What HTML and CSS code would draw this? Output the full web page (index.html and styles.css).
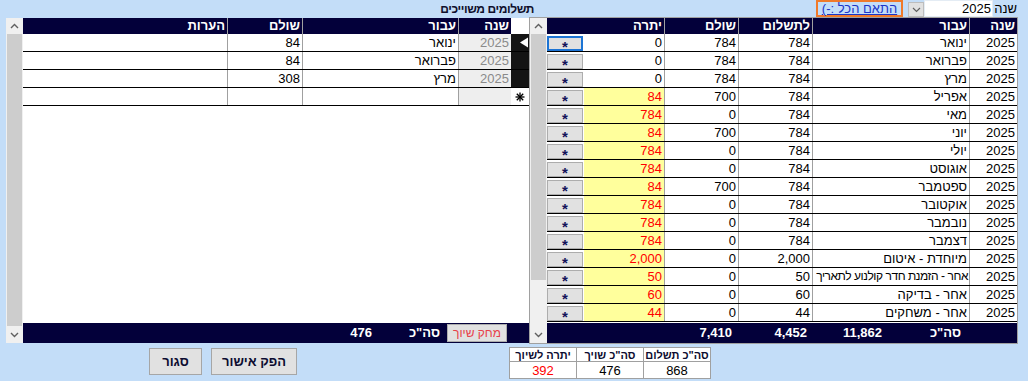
FILE: index.html
```html
<!DOCTYPE html>
<html lang="he" dir="rtl">
<head>
<meta charset="utf-8">
<title>תשלומים</title>
<link rel="stylesheet" href="styles.css">
</head>
<body>
<div class="topbar">
  <span class="year-label">שנה</span>
  <span class="yearbox"><span class="yearval">2025</span></span>
  <span class="dd-btn"><svg width="9" height="6" viewBox="0 0 9 6"><polyline points="1,1 4.5,4.5 8,1" fill="none" stroke="#606060" stroke-width="1.2"/></svg></span>
  <a class="fit-btn">התאם הכל :-)</a>
  <span class="title">תשלומים משוייכים</span>
</div>

<div class="panels">
  <div class="panel main-panel">
    <div class="grid">
      <div class="mrow ghead">
        <div class="c sep">שנה</div>
        <div class="c sep">עבור</div>
        <div class="c sep">לתשלום</div>
        <div class="c sep">שולם</div>
        <div class="c">יתרה</div>
        <div class="c"></div>
      </div>
      <div class="gbody">
        <div class="mrow"><div class="c sep">2025</div><div class="c sep">ינואר</div><div class="c sep">784</div><div class="c sep">784</div><div class="c">0</div><div class="c cb"><span class="rbtn focus">*</span></div></div>
        <div class="mrow"><div class="c sep">2025</div><div class="c sep">פברואר</div><div class="c sep">784</div><div class="c sep">784</div><div class="c">0</div><div class="c cb"><span class="rbtn">*</span></div></div>
        <div class="mrow"><div class="c sep">2025</div><div class="c sep">מרץ</div><div class="c sep">784</div><div class="c sep">784</div><div class="c">0</div><div class="c cb"><span class="rbtn">*</span></div></div>
        <div class="mrow"><div class="c sep">2025</div><div class="c sep">אפריל</div><div class="c sep">784</div><div class="c sep">700</div><div class="c due">84</div><div class="c cb"><span class="rbtn">*</span></div></div>
        <div class="mrow"><div class="c sep">2025</div><div class="c sep">מאי</div><div class="c sep">784</div><div class="c sep">0</div><div class="c due">784</div><div class="c cb"><span class="rbtn">*</span></div></div>
        <div class="mrow"><div class="c sep">2025</div><div class="c sep">יוני</div><div class="c sep">784</div><div class="c sep">700</div><div class="c due">84</div><div class="c cb"><span class="rbtn">*</span></div></div>
        <div class="mrow"><div class="c sep">2025</div><div class="c sep">יולי</div><div class="c sep">784</div><div class="c sep">0</div><div class="c due">784</div><div class="c cb"><span class="rbtn">*</span></div></div>
        <div class="mrow"><div class="c sep">2025</div><div class="c sep">אוגוסט</div><div class="c sep">784</div><div class="c sep">0</div><div class="c due">784</div><div class="c cb"><span class="rbtn">*</span></div></div>
        <div class="mrow"><div class="c sep">2025</div><div class="c sep">ספטמבר</div><div class="c sep">784</div><div class="c sep">700</div><div class="c due">84</div><div class="c cb"><span class="rbtn">*</span></div></div>
        <div class="mrow"><div class="c sep">2025</div><div class="c sep">אוקטובר</div><div class="c sep">784</div><div class="c sep">0</div><div class="c due">784</div><div class="c cb"><span class="rbtn">*</span></div></div>
        <div class="mrow"><div class="c sep">2025</div><div class="c sep">נובמבר</div><div class="c sep">784</div><div class="c sep">0</div><div class="c due">784</div><div class="c cb"><span class="rbtn">*</span></div></div>
        <div class="mrow"><div class="c sep">2025</div><div class="c sep">דצמבר</div><div class="c sep">784</div><div class="c sep">0</div><div class="c due">784</div><div class="c cb"><span class="rbtn">*</span></div></div>
        <div class="mrow"><div class="c sep">2025</div><div class="c sep">מיוחדת - איטום</div><div class="c sep">2,000</div><div class="c sep">0</div><div class="c due">2,000</div><div class="c cb"><span class="rbtn">*</span></div></div>
        <div class="mrow"><div class="c sep">2025</div><div class="c sep tight">אחר - הזמנת חדר קולנוע לתאריך</div><div class="c sep">50</div><div class="c sep">0</div><div class="c due">50</div><div class="c cb"><span class="rbtn">*</span></div></div>
        <div class="mrow"><div class="c sep">2025</div><div class="c sep">אחר - בדיקה</div><div class="c sep">60</div><div class="c sep">0</div><div class="c due">60</div><div class="c cb"><span class="rbtn">*</span></div></div>
        <div class="mrow"><div class="c sep">2025</div><div class="c sep">אחר - משחקים</div><div class="c sep">44</div><div class="c sep">0</div><div class="c due">44</div><div class="c cb"><span class="rbtn">*</span></div></div>
      </div>
      <div class="gfoot main-foot">
        <span class="ft-label">סה"כ</span>
        <span class="ft-num">11,862</span>
        <span class="ft-num">4,452</span>
        <span class="ft-num">7,410</span>
      </div>
    </div>
    <div class="vscroll">
      <div class="sb-arrow"><svg width="9" height="6" viewBox="0 0 9 6"><polyline points="1,5 4.5,1.5 8,5" fill="none" stroke="#606060" stroke-width="1.4"/></svg></div>
      <div class="sb-thumb main-thumb"></div>
      <div class="sb-track"></div>
      <div class="sb-arrow down"><svg width="9" height="6" viewBox="0 0 9 6"><polyline points="1,1 4.5,4.5 8,1" fill="none" stroke="#606060" stroke-width="1.4"/></svg></div>
    </div>
  </div>

  <div class="panel sub-panel">
    <div class="grid">
      <div class="srow ghead">
        <div class="c sel-head"></div>
        <div class="c sep">שנה</div>
        <div class="c sep">עבור</div>
        <div class="c sep">שולם</div>
        <div class="c">הערות</div>
      </div>
      <div class="gbody">
        <div class="srow"><div class="c sel dark"><svg width="10" height="11" viewBox="0 0 10 11"><polygon points="1,5.5 9,0.5 9,10.5" fill="#fff"/></svg></div><div class="c sep yr">2025</div><div class="c sep">ינואר</div><div class="c sep">84</div><div class="c"></div></div>
        <div class="srow"><div class="c sel dark"></div><div class="c sep yr">2025</div><div class="c sep">פברואר</div><div class="c sep">84</div><div class="c"></div></div>
        <div class="srow"><div class="c sel dark"></div><div class="c sep yr">2025</div><div class="c sep">מרץ</div><div class="c sep">308</div><div class="c"></div></div>
        <div class="srow"><div class="c sel"><svg width="10" height="10" viewBox="0 0 10 10"><g stroke="#000" stroke-width="1.3"><line x1="5" y1="0.5" x2="5" y2="9.5"/><line x1="0.5" y1="5" x2="9.5" y2="5"/><line x1="1.8" y1="1.8" x2="8.2" y2="8.2"/><line x1="8.2" y1="1.8" x2="1.8" y2="8.2"/></g></svg></div><div class="c sep yr"></div><div class="c sep"></div><div class="c sep"></div><div class="c"></div></div>
      </div>
      <div class="gfoot sub-foot">
        <span class="del-btn">מחק שיוך</span>
        <span class="ft-label sub-label">סה"כ</span>
        <span class="ft-num sub-num">476</span>
      </div>
    </div>
    <div class="vscroll">
      <div class="sb-arrow"><svg width="9" height="6" viewBox="0 0 9 6"><polyline points="1,5 4.5,1.5 8,5" fill="none" stroke="#606060" stroke-width="1.4"/></svg></div>
      <div class="sb-thumb sub-thumb"></div>
      <div class="sb-arrow down"><svg width="9" height="6" viewBox="0 0 9 6"><polyline points="1,1 4.5,4.5 8,1" fill="none" stroke="#606060" stroke-width="1.4"/></svg></div>
    </div>
  </div>
</div>

<div class="bottom">
  <table class="summary">
    <tr><th>סה"כ תשלום</th><th>סה"כ שויך</th><th>יתרה לשיוך</th></tr>
    <tr><td>868</td><td>476</td><td class="red">392</td></tr>
  </table>
  <button class="act-btn issue">הפק אישור</button>
  <button class="act-btn close">סגור</button>
</div>
</body>
</html>
```

FILE: styles.css
```css
* { box-sizing: border-box; }
html, body { margin: 0; padding: 0; }
body {
  width: 1028px;
  height: 381px;
  overflow: hidden;
  background: #c3ddf8;
  font-family: "Liberation Sans", Arial, "DejaVu Sans", sans-serif;
  font-size: 13px;
  color: #000;
}

/* top bar */
.topbar {
  display: flex;
  align-items: flex-start;
  height: 17px;
  padding-right: 11px;
}
.topbar > * { flex: 0 0 auto; }
.year-label { width: 23px; line-height: 17px; }
.yearbox {
  display: flex;
  justify-content: flex-start;
  width: 69px;
  height: 17px;
  margin-right: 1px;
  background: #ffffff;
  border: 1px solid #e4ecf4;
  padding-right: 1px;
}
.yearval { line-height: 15px; }
.dd-btn {
  width: 16px;
  height: 15px;
  margin-top: 2px;
  background: #e1e1e1;
  border: 1px solid #bdbdbd;
  display: flex;
  align-items: center;
  justify-content: center;
}
.fit-btn {
  width: 87px;
  height: 17px;
  margin-right: 5px;
  border: 2px solid #f07a2a;
  color: #1a36c8;
  text-decoration: underline;
  text-align: center;
  line-height: 13px;
}
.title {
  margin-right: 282px;
  line-height: 19px;
  font-weight: bold;
  font-size: 12px;
  letter-spacing: -0.4px;
  color: #10102c;
}

/* panels */
.panels {
  display: flex;
  padding-right: 10px;
  height: 327px;
}
.panel { display: flex; height: 327px; flex: 0 0 auto; }
.main-panel { width: 489px; border: 1px solid #a0a0a0; }
.sub-panel { width: 523px; padding: 1px 0; }

.grid {
  flex: 1;
  display: flex;
  flex-direction: column;
  background: #fff;
  min-width: 0;
}
.gbody { flex: 1; }

.mrow, .srow {
  display: grid;
  height: 18px;
  border-bottom: 1px solid #000;
}
.mrow { grid-template-columns: 48px 157px 74px 74px 80px 37px; }
.srow { grid-template-columns: 18px 53px 156px 75px 204px; }

.c {
  line-height: 17px;
  padding-right: 2px;
  white-space: nowrap;
  overflow: hidden;
}
.sep { border-left: 1px solid #a0a0a0; }
.tight { font-size: 12px; letter-spacing: -0.45px; padding-right: 1px; }

.ghead {
  height: 16px;
  border-bottom: none;
  background: #03003a;
  color: #fff;
  font-weight: bold;
}
.ghead .c { line-height: 16px; }
.sel-head { background: #fff; }

.due { background: #ffff9c; color: #f00; }
.cb { padding: 2px 1px 0 0; overflow: visible; }
.rbtn {
  display: block;
  width: 36px;
  height: 15px;
  padding-top: 4px;
  background: #e1e1e1;
  border: 1px solid #adadad;
  color: #14145a;
  font-size: 15px;
  font-weight: bold;
  text-align: center;
  line-height: 11px;
}
.rbtn.focus { border: 2px solid #1c74d4; padding-top: 3px; }

.sel { padding: 0; display: flex; align-items: center; justify-content: center; }
.sel.dark { background: #141414; justify-content: flex-start; padding-left: 2px; }
.yr { background: #eeeeee; color: #8a8a8a; }

.gfoot {
  height: 20px;
  background: #03003a;
  color: #fff;
  font-weight: bold;
  display: flex;
  align-items: flex-start;
  line-height: 20px;
}
.gfoot > * { flex: 0 0 auto; }
.main-foot { padding-right: 56px; }
.ft-label { width: 79px; }
.ft-num { width: 75px; }
.sub-foot { padding-right: 22px; }
.del-btn {
  width: 60px;
  height: 18px;
  margin-top: 1px;
  background: #e1e1e1;
  border: 1px solid #adadad;
  color: #e8404a;
  font-weight: normal;
  font-size: 12px;
  text-align: center;
  line-height: 16px;
}
.sub-label { width: auto; margin-right: 7px; }
.sub-num { width: auto; margin-right: 37px; }

/* scrollbars */
.vscroll {
  width: 17px;
  flex: 0 0 17px;
  display: flex;
  flex-direction: column;
  background: #f0f0f0;
}
.sb-arrow {
  height: 16px;
  flex: 0 0 auto;
  display: flex;
  align-items: center;
  justify-content: center;
}
.sb-arrow.down { height: 17px; }
.sb-thumb { background: #cdcdcd; margin: 0 1px; }
.main-thumb { height: 246px; flex: 0 0 auto; }
.sb-track { flex: 1; }
.sub-thumb { flex: 1; }

/* bottom */
.bottom {
  display: flex;
  align-items: flex-start;
  padding-right: 317px;
  margin-top: 3px;
}
.bottom > * { flex: 0 0 auto; }
.summary {
  border-collapse: collapse;
  table-layout: fixed;
  width: 201px;
  background: #fff;
}
.summary th, .summary td {
  border: 1px solid #a0a0a0;
  width: 67px;
  padding: 0;
  text-align: center;
  white-space: nowrap;
}
.summary th {
  height: 14px;
  font-size: 11px;
  font-weight: bold;
  line-height: 12px;
  color: #0c0c30;
}
.summary td { height: 17px; line-height: 15px; }
.summary .red { color: #f00; }
.act-btn {
  margin-top: 1px;
  height: 27px;
  background: #e1e1e1;
  border: 1px solid #a6a6a6;
  font-family: inherit;
  font-size: 13px;
  font-weight: bold;
  color: #0c0c30;
  padding: 0;
}
.issue { width: 86px; margin-right: 212px; }
.close { width: 53px; margin-right: 9px; }
```
